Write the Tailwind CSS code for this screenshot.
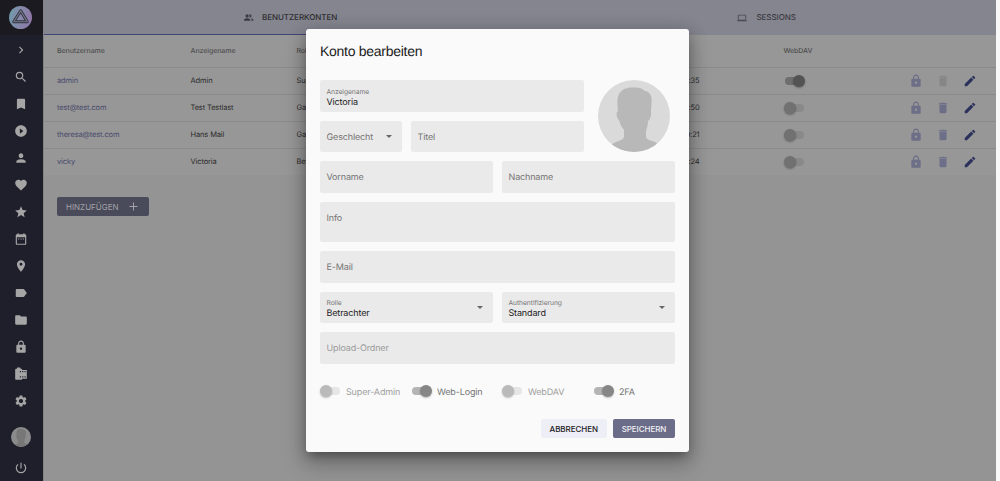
<!DOCTYPE html>
<html lang="de">
<head>
<meta charset="utf-8">
<title>Benutzerkonten</title>
<script src="https://cdn.jsdelivr.net/npm/@tailwindcss/browser@4"></script>
</head>
<body class="w-[1000px] h-[481px] overflow-hidden bg-[#f8f8f8] font-['Inter',sans-serif] [text-rendering:geometricPrecision]">
<svg class="hidden">
  <symbol id="chev" viewBox="0 0 24 24"><path d="M8.6 16.6 13.2 12 8.6 7.4 10 6l6 6-6 6z"/></symbol>
  <symbol id="search" viewBox="0 0 24 24"><path d="M15.5 14h-.79l-.28-.27A6.47 6.47 0 0 0 16 9.5 6.5 6.5 0 1 0 9.5 16c1.61 0 3.09-.59 4.23-1.57l.27.28v.79l5 4.99L20.49 19l-4.99-5zm-6 0C7.01 14 5 11.99 5 9.5S7.01 5 9.5 5 14 7.01 14 9.5 11.99 14 9.5 14z"/></symbol>
  <symbol id="book" viewBox="0 0 24 24"><path d="M17 3H7c-1.1 0-2 .9-2 2v16l7-3 7 3V5c0-1.1-.9-2-2-2z"/></symbol>
  <symbol id="play" viewBox="0 0 24 24"><path d="M12 2C6.48 2 2 6.48 2 12s4.48 10 10 10 10-4.48 10-10S17.52 2 12 2zm-2 14.5v-9l6 4.5-6 4.5z"/></symbol>
  <symbol id="person" viewBox="0 0 24 24"><path d="M12 12c2.21 0 4-1.79 4-4s-1.79-4-4-4-4 1.79-4 4 1.79 4 4 4zm0 2c-2.67 0-8 1.34-8 4v2h16v-2c0-2.66-5.33-4-8-4z"/></symbol>
  <symbol id="heart" viewBox="0 0 24 24"><path d="m12 21.35-1.45-1.32C5.4 15.36 2 12.28 2 8.5 2 5.42 4.42 3 7.5 3c1.74 0 3.41.81 4.5 2.09C13.09 3.81 14.76 3 16.5 3 19.58 3 22 5.42 22 8.5c0 3.78-3.4 6.86-8.55 11.54L12 21.35z"/></symbol>
  <symbol id="star" viewBox="0 0 24 24"><path d="M12 17.27 18.18 21l-1.64-7.03L22 9.24l-7.19-.61L12 2 9.19 8.63 2 9.24l5.46 4.73L5.82 21z"/></symbol>
  <symbol id="cal" viewBox="0 0 24 24"><path d="M9 11H7v2h2v-2zm4 0h-2v2h2v-2zm4 0h-2v2h2v-2zm2-7h-1V2h-2v2H8V2H6v2H5a2 2 0 0 0-2 2v14a2 2 0 0 0 2 2h14a2 2 0 0 0 2-2V6a2 2 0 0 0-2-2zm0 16H5V9h14v11z"/></symbol>
  <symbol id="pin" viewBox="0 0 24 24"><path d="M12 2C8.13 2 5 5.13 5 9c0 5.25 7 13 7 13s7-7.75 7-13c0-3.87-3.13-7-7-7zm0 9.5a2.5 2.5 0 0 1 0-5 2.5 2.5 0 0 1 0 5z"/></symbol>
  <symbol id="label" viewBox="0 0 24 24"><path d="M17.63 5.84C17.27 5.33 16.67 5 16 5L5 5.01C3.9 5.01 3 5.9 3 7v10c0 1.1.9 1.99 2 1.99L16 19c.67 0 1.27-.33 1.63-.84L22 12l-4.37-6.16z"/></symbol>
  <symbol id="folder" viewBox="0 0 24 24"><path d="M10 4H4c-1.1 0-1.99.9-1.99 2L2 18c0 1.1.9 2 2 2h16c1.1 0 2-.9 2-2V8c0-1.1-.9-2-2-2h-8l-2-2z"/></symbol>
  <symbol id="lock" viewBox="0 0 24 24"><path d="M18 8h-1V6c0-2.76-2.24-5-5-5S7 3.24 7 6v2H6c-1.1 0-2 .9-2 2v10c0 1.1.9 2 2 2h12c1.1 0 2-.9 2-2V10c0-1.1-.9-2-2-2zm-6 9c-1.1 0-2-.9-2-2s.9-2 2-2 2 .9 2 2-.9 2-2 2zm3.100-9H8.900V6c0-1.710 1.390-3.100 3.100-3.100 1.710 0 3.100 1.390 3.100 3.100v2z"/></symbol>
  <symbol id="roll" viewBox="0 0 24 24"><path d="M14 5c0-1.100-.9-2-2-2h-1V2c0-.55-.45-1-1-1H6c-.55 0-1 .45-1 1v1H4c-1.100 0-2 .9-2 2v15c0 1.100.9 2 2 2h8c1.100 0 2-.9 2-2h8V5h-8zm-2 13h-2v-2h2v2zm0-9h-2V7h2v2zm4 9h-2v-2h2v2zm0-9h-2V7h2v2zm4 9h-2v-2h2v2zm0-9h-2V7h2v2z"/></symbol>
  <symbol id="gear" viewBox="0 0 24 24"><path d="M19.14 12.94c.04-.3.06-.61.06-.94 0-.32-.02-.64-.07-.94l2.03-1.58a.49.49 0 0 0 .12-.61l-1.920-3.320a.488.488 0 0 0-.59-.22l-2.390.96c-.5-.38-1.030-.7-1.620-.94l-.36-2.540a.484.484 0 0 0-.48-.41h-3.840c-.24 0-.43.17-.47.41l-.36 2.540c-.59.24-1.130.57-1.620.94l-2.390-.96c-.22-.08-.47 0-.59.22L2.740 8.870c-.12.21-.08.47.12.61l2.030 1.580c-.05.3-.09.63-.09.94s.02.64.07.94l-2.030 1.580a.49.49 0 0 0-.12.61l1.920 3.320c.12.22.37.29.59.22l2.390-.96c.5.38 1.030.7 1.620.94l.36 2.540c.05.24.24.41.48.41h3.840c.24 0 .44-.17.47-.41l.36-2.540c.59-.24 1.130-.56 1.620-.94l2.390.96c.22.08.47 0 .59-.22l1.920-3.320c.12-.22.07-.47-.12-.61l-2.010-1.580zM12 15.600c-1.980 0-3.600-1.620-3.600-3.600s1.620-3.600 3.600-3.600 3.600 1.620 3.600 3.600-1.620 3.600-3.600 3.600z"/></symbol>
  <symbol id="power" viewBox="0 0 24 24"><path d="M13 3h-2v10h2V3zm4.830 2.170-1.420 1.420A6.920 6.920 0 0 1 19 12c0 3.870-3.130 7-7 7s-7-3.130-7-7c0-2.190 1.010-4.140 2.580-5.420L6.170 5.170A8.932 8.932 0 0 0 3 12a9 9 0 0 0 18 0c0-2.740-1.230-5.180-3.170-6.830z"/></symbol>
  <symbol id="group" viewBox="0 0 24 24"><path d="M9 13.750c-2.340 0-7 1.170-7 3.500V19h14v-1.750c0-2.330-4.660-3.500-7-3.500zM9 12c1.930 0 3.500-1.570 3.500-3.500S10.930 5 9 5 5.500 6.570 5.500 8.500 7.070 12 9 12zM17.200 13.810c1.160.84 1.500 1.960 1.500 3.440V19h4v-1.750c0-2.020-3.500-3.170-5.500-3.440zM15 12c1.930 0 3.500-1.570 3.500-3.500S16.930 5 15 5c-.54 0-1.040.13-1.500.35.630.89 1 1.980 1 3.150s-.37 2.260-1 3.150c.46.22.96.35 1.500.35z"/></symbol>
  <symbol id="laptop" viewBox="0 0 24 24"><path d="M20 18c1.100 0 1.990-.9 1.990-2L22 6c0-1.100-.9-2-2-2H4c-1.100 0-2 .9-2 2v10c0 1.100.9 2 2 2H0v2h24v-2h-4zM4 6h16v10H4V6z"/></symbol>
  <symbol id="trash" viewBox="0 0 24 24"><path d="M6 19c0 1.100.9 2 2 2h8c1.100 0 2-.9 2-2V7H6v12zM19 4h-3.500l-1-1h-5l-1 1H5v2h14V4z"/></symbol>
  <symbol id="pen" viewBox="0 0 24 24"><path d="M3 17.250V21h3.750L17.810 9.940l-3.750-3.750L3 17.250zM20.710 7.040a1 1 0 0 0 0-1.410l-2.340-2.340a1 1 0 0 0-1.410 0l-1.830 1.830 3.750 3.750 1.830-1.830z"/></symbol>
  <symbol id="head" viewBox="0 0 72 72"><path d="M13 65C17 61 25 61 26 57V50C23 47 22 43 21 40C19 39 18 34 19 32L20 31C19 25 19 18 21 14C24 9 29 7 36 7.500C40 7 44 8 47 11C50 11 53 14 53.500 18C54 23 53 28 53 32C53.500 36 52 40 50 41C50 45 49 48 48 51V57C49 61 55 60 60 64Q50 74 36 74Q22 74 13 65Z"/></symbol>
</svg>

<div class="flex w-[996px] h-[481px] bg-[#949494] overflow-hidden">
  <!-- Sidebar -->
  <nav class="w-[43.500px] shrink-0 bg-[#1f1e2b] flex flex-col items-center text-[#a5a5a5] border-r border-[#838388]">
    <div class="w-full h-[35px] bg-[#1a1a20] flex items-center justify-center pr-[1px]">
      <svg class="size-[23px]" viewBox="0 0 46 46">
        <defs><linearGradient id="lg" x1="0" y1="0.300" x2="1" y2="0.500"><stop offset="0" stop-color="#7099a8"/><stop offset="0.500" stop-color="#8588ab"/><stop offset="1" stop-color="#8f77a8"/></linearGradient></defs>
        <circle cx="23" cy="23" r="23" fill="url(#lg)"/>
        <g fill="none" stroke-linejoin="round"><path d="M23.500 9.500 36.500 31.500H9.500z" stroke="#33353f" stroke-width="6"/><path d="M23.500 9.500 36.500 31.500H9.500z" stroke="#74778c" stroke-width="2.400"/></g>
      </svg>
    </div>
    <div class="w-full flex flex-col items-center pt-[1.500px] pr-[1px]">
      <div class="h-[27px] flex items-center"><svg class="size-[14px] fill-current"><use href="#chev"/></svg></div>
      <div class="h-[27px] flex items-center"><svg class="size-[14px] fill-current"><use href="#search"/></svg></div>
      <div class="h-[27px] flex items-center"><svg class="size-[14px] fill-current"><use href="#book"/></svg></div>
      <div class="h-[27px] flex items-center"><svg class="size-[14px] fill-current"><use href="#play"/></svg></div>
      <div class="h-[27px] flex items-center"><svg class="size-[14px] fill-current"><use href="#person"/></svg></div>
      <div class="h-[27px] flex items-center"><svg class="size-[14px] fill-current"><use href="#heart"/></svg></div>
      <div class="h-[27px] flex items-center"><svg class="size-[14px] fill-current"><use href="#star"/></svg></div>
      <div class="h-[27px] flex items-center"><svg class="size-[14px] fill-current"><use href="#cal"/></svg></div>
      <div class="h-[27px] flex items-center"><svg class="size-[14px] fill-current"><use href="#pin"/></svg></div>
      <div class="h-[27px] flex items-center"><svg class="size-[14px] fill-current"><use href="#label"/></svg></div>
      <div class="h-[27px] flex items-center"><svg class="size-[14px] fill-current"><use href="#folder"/></svg></div>
      <div class="h-[27px] flex items-center"><svg class="size-[14px] fill-current"><use href="#lock"/></svg></div>
      <div class="h-[27px] flex items-center"><svg class="size-[14px] fill-current"><use href="#roll"/></svg></div>
      <div class="h-[27px] flex items-center"><svg class="size-[14px] fill-current"><use href="#gear"/></svg></div>
      <div class="mt-[12px] size-5 rounded-full bg-[#8b8b8b] overflow-hidden"><svg class="size-5 fill-[#777]"><use href="#head"/></svg></div>
      <svg class="mt-[14.500px] size-[14px] fill-current"><use href="#power"/></svg>
    </div>
  </nav>

  <!-- Main -->
  <main class="flex-1 min-w-0 flex flex-col text-[#2c2c2c]">
    <div class="h-[35px] bg-[#858590] flex text-[8px] font-medium tracking-[-0.050px]">
      <div class="flex-1 flex items-center justify-center gap-[8.500px] border-b border-[#3f4575] pl-[17px]"><svg class="size-[11px] fill-[#3a3a40]"><use href="#group"/></svg><span class="-mt-px">BENUTZERKONTEN</span></div>
      <div class="flex-1 flex items-center justify-center gap-[9px] text-[#3c3c42] pl-[18px]"><svg class="size-[10px] fill-[#48484e]"><use href="#laptop"/></svg><span class="-mt-[2px]">SESSIONS</span></div>
    </div>
    <div id="table" class="bg-[#979797] text-[7.500px] tracking-[-0.130px]">
      <div class="h-[32px] flex items-center pt-[1px] pl-[13.500px] text-[7px] font-medium tracking-[-0.080px] text-[#4f4f4f]">
        <span class="w-[133.500px]">Benutzername</span><span class="w-[106px]">Anzeigename</span><span class="w-[487px]">Rolle</span><span>WebDAV</span>
      </div>
    </div>
    <div class="pt-[22px] pl-[13.500px]">
      <button class="w-[92px] h-[19px] rounded-[2px] bg-[#494a5a] text-[#a2a2a8] flex items-center justify-between pl-[9px] pr-[11px] text-[8px]"><span>HINZUFÜGEN</span><svg class="size-[9px]" viewBox="0 0 9 9" stroke="currentColor" fill="none"><path d="M4.500 .5v8M.5 4.500h8"/></svg></button>
    </div>
  </main>
</div>

<!-- Dialog -->
<section class="absolute left-[306px] top-[29px] w-[382.500px] h-[423px] rounded-[3px] bg-[#fafafa] shadow-[0_6px_9px_-4px_rgba(0,0,0,0.300),0_13px_22px_2px_rgba(0,0,0,0.180),0_3px_16px_3px_rgba(0,0,0,0.180)] px-[14px] pt-[12.500px] text-[9px] tracking-[-0.150px] text-[#757575]">
  <h1 class="h-[18px] leading-[18px] text-[14px] tracking-[-0.280px] text-[#212121] font-['Liberation_Sans',sans-serif] whitespace-nowrap">Konto bearbeiten</h1>
  <div class="mt-[20.500px] w-[355px] flex flex-col gap-[9px]">
    <div class="flex justify-between">
      <div class="w-[264px] flex flex-col gap-[9px]">
        <div class="h-[31.500px] rounded-[2px] bg-[#eaeaea] px-[6.500px] pt-[8px] flex flex-col"><span class="text-[6.700px] leading-[9px] tracking-[-0.050px]">Anzeigename</span><span class="leading-[12px] text-[#212121]">Victoria</span></div>
        <div class="flex gap-[9px]">
          <div class="w-[82px] h-[31.500px] rounded-[2px] bg-[#eaeaea] px-[6.500px] flex items-center justify-between"><span class="pt-[2px]">Geschlecht</span><i class="mr-[4px] border-x-[3px] border-x-transparent border-t-[3px] border-t-[#666]"></i></div>
          <div class="flex-1 h-[31.500px] rounded-[2px] bg-[#eaeaea] px-[6.500px] pt-[2px] flex items-center">Titel</div>
        </div>
      </div>
      <div class="size-[72px] mr-[5px] rounded-full bg-[#dadada] overflow-hidden"><svg class="size-[72px] fill-[#b8b8b8]"><use href="#head"/></svg></div>
    </div>
    <div class="flex gap-[9px]">
      <div class="flex-1 h-[31.500px] rounded-[2px] bg-[#eaeaea] px-[6.500px] pt-[2px] flex items-center">Vorname</div>
      <div class="flex-1 h-[31.500px] rounded-[2px] bg-[#eaeaea] px-[6.500px] pt-[2px] flex items-center">Nachname</div>
    </div>
    <div class="h-[40.500px] rounded-[2px] bg-[#eaeaea] px-[6.500px] pt-[11px] leading-[12px]">Info</div>
    <div class="h-[31.500px] rounded-[2px] bg-[#eaeaea] px-[6.500px] pt-[2px] flex items-center">E-Mail</div>
    <div class="flex gap-[9px]">
      <div class="flex-1 h-[31.500px] rounded-[2px] bg-[#eaeaea] px-[6.500px] flex items-center justify-between"><div class="flex flex-col pt-[4px]"><span class="text-[6.700px] leading-[9px] tracking-[-0.050px]">Rolle</span><span class="leading-[12px] text-[#212121]">Betrachter</span></div><i class="mr-[4px] border-x-[3px] border-x-transparent border-t-[3px] border-t-[#666]"></i></div>
      <div class="flex-1 h-[31.500px] rounded-[2px] bg-[#eaeaea] px-[6.500px] flex items-center justify-between"><div class="flex flex-col pt-[4px]"><span class="text-[6.700px] leading-[9px] tracking-[-0.050px]">Authentifizierung</span><span class="leading-[12px] text-[#212121]">Standard</span></div><i class="mr-[4px] border-x-[3px] border-x-transparent border-t-[3px] border-t-[#666]"></i></div>
    </div>
    <div class="h-[31.500px] rounded-[2px] bg-[#eaeaea] px-[6.500px] pt-[2px] flex items-center text-[#9b9b9b]">Upload-Ordner</div>
  </div>
  <div class="mt-[20px] h-[14px] grid grid-cols-[92px_90px_92px_81px] items-center">
    <div class="flex items-center gap-[5.500px] text-[#a0a0a0]"><div class="w-[20.500px] h-[12px] flex items-center"><b class="size-[12px] rounded-full bg-[#bababa] shadow-[0_1px_2px_rgba(0,0,0,0.250)] z-10"></b><b class="w-[11px] -ml-[3px] h-[8px] rounded-r-full bg-[#e6e6e6]"></b></div><span class="pt-[2px]">Super-Admin</span></div>
    <div class="flex items-center gap-[5.500px]"><div class="w-[19.500px] h-[12px] flex items-center"><b class="w-[11px] -mr-[3px] h-[8px] rounded-l-full bg-[#b4b4b4]"></b><b class="size-[12px] rounded-full bg-[#868686] shadow-[0_1px_2px_rgba(0,0,0,0.250)]"></b></div><span class="pt-[2px]">Web-Login</span></div>
    <div class="flex items-center gap-[5.500px] text-[#a0a0a0]"><div class="w-[20.500px] h-[12px] flex items-center"><b class="size-[12px] rounded-full bg-[#bababa] shadow-[0_1px_2px_rgba(0,0,0,0.250)] z-10"></b><b class="w-[11px] -ml-[3px] h-[8px] rounded-r-full bg-[#e6e6e6]"></b></div><span class="pt-[2px]">WebDAV</span></div>
    <div class="flex items-center gap-[5.500px]"><div class="w-[19.500px] h-[12px] flex items-center"><b class="w-[11px] -mr-[3px] h-[8px] rounded-l-full bg-[#b4b4b4]"></b><b class="size-[12px] rounded-full bg-[#868686] shadow-[0_1px_2px_rgba(0,0,0,0.250)]"></b></div><span class="pt-[2px]">2FA</span></div>
  </div>
  <div class="mt-[21px] flex justify-end gap-[6.500px] text-[8px] font-medium tracking-[-0.050px] w-[355px]">
    <button class="w-[65.500px] h-[19px] pt-px rounded-[2px] bg-[#eeeef6] text-[#212121]">ABBRECHEN</button>
    <button class="w-[62px] h-[19px] pt-px rounded-[2px] bg-[#6b6c87] text-[#f0f0f5]">SPEICHERN</button>
  </div>
</section>

<script>
  const users = [
    ['admin', 'Admin', 'Super-Admin', '08:35', true],
    ['test@test.com', 'Test Testlast', 'Gast', '09:50', false],
    ['theresa@test.com', 'Hans Mail', 'Gast', '10:21', false],
    ['vicky', 'Victoria', 'Betrachter', '11:24', false],
  ];
  const on = '<div class="w-[22px] h-[12px] pl-[1.500px] flex items-center"><b class="w-[11px] -mr-[3px] h-[8px] rounded-l-full bg-[#6e6e6e]"></b><b class="size-[12px] rounded-full bg-[#535353] shadow-[0_1px_2px_rgba(0,0,0,0.300)]"></b></div>';
  const off = '<div class="w-[22px] h-[12px] flex items-center"><b class="size-[12px] rounded-full bg-[#717171] shadow-[0_1px_2px_rgba(0,0,0,0.300)] z-10"></b><b class="w-[11px] -ml-[3px] h-[8px] rounded-r-full bg-[#898989]"></b></div>';
  document.getElementById('table').insertAdjacentHTML('beforeend', users.map(([u, n, r, t, w]) => `
    <div class="h-[27px] flex items-center pl-[13.500px] pr-[19px] border-t border-[#8a8a8a] whitespace-nowrap">
      <span class="w-[133.500px] text-[#494a6c]">${u}</span><span class="w-[106px]">${n}</span>
      <span class="w-[382px]">${r}</span><span class="w-[21px] flex justify-end">${t}</span>
      <div class="ml-[84px] -mt-px">${w ? on : off}</div>
      <div class="ml-auto -mt-px flex items-center gap-[13px]"><svg class="size-[14px] fill-[#6d6e87]"><use href="#lock"/></svg><svg class="size-[14px] ${w ? 'fill-[#868686]' : 'fill-[#6d6e87]'}"><use href="#trash"/></svg><svg class="size-[14px] fill-[#2b315b]"><use href="#pen"/></svg></div>
    </div>`).join(''));
</script>
</body>
</html>
